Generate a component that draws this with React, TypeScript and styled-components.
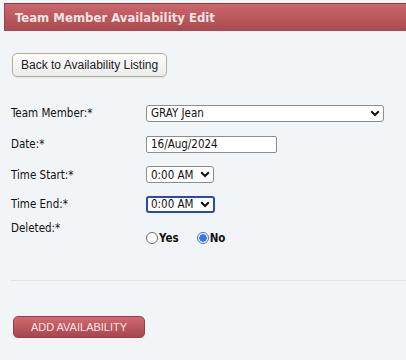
import React from 'react';
import styled, { createGlobalStyle } from 'styled-components';

const GlobalStyle = createGlobalStyle`
  html, body {
    margin: 0;
    padding: 0;
    background: #f2f5f8;
  }
  body {
    font-family: "DejaVu Sans Condensed", "DejaVu Sans", Verdana, sans-serif;
    color: #111;
  }
`;

const Page = styled.div`
  padding: 3px 0 0 4px;
  width: 420px;
`;

const TitleBar = styled.div`
  height: 28px;
  box-sizing: border-box;
  border-top: 1px solid #8c3a3f;
  border-left: 1px solid #9a4449;
  background: linear-gradient(#cc676b, #b8575c 55%, #a94a50);
  display: flex;
  align-items: center;
  padding-left: 10px;
  font-size: 13px;
  font-weight: 700;
  color: #f3e3e3;
`;

const Content = styled.div`
  padding: 22px 0 0 7px;
`;

const BackButton = styled.button`
  height: 24px;
  padding: 0 8px;
  margin-left: 1px;
  border: 1px solid #b5b092;
  border-radius: 5px;
  background: linear-gradient(#fdfdfd, #ececec);
  box-shadow: 0 1px 1px rgba(0, 0, 0, 0.08);
  font-family: "Liberation Sans", Arial, sans-serif;
  font-size: 12px;
  color: #222;
`;

const Form = styled.div`
  margin-top: 21px;
  display: grid;
  grid-template-columns: 135px 1fr;
  grid-template-rows: 30px 32px 29px 30px 30px;
  align-items: center;
  font-size: 11.5px;
`;

const Label = styled.div<{ $top?: boolean }>`
  white-space: nowrap;
  align-self: ${(p) => (p.$top ? 'start' : 'center')};
  padding-top: ${(p) => (p.$top ? 2 : 0)}px;
`;

const SelectBox = styled.div<{ $width: number; $focus?: boolean }>`
  width: ${(p) => p.$width}px;
  height: 17px;
  box-sizing: border-box;
  display: flex;
  align-items: center;
  justify-content: space-between;
  padding: 0 3px 0 ${(p) => (p.$focus ? 3 : 4)}px;
  background: #fff;
  border: ${(p) => (p.$focus ? '2px solid #2b49b3' : '1px solid #8d8d8d')};
  border-radius: 3px;
  font-size: 11.5px;
  color: #111;
  white-space: nowrap;
`;

const TextBox = styled.div`
  width: 131px;
  height: 17px;
  box-sizing: border-box;
  display: flex;
  align-items: center;
  padding: 0 4px;
  background: #fff;
  border: 1px solid #8d8d8d;
  border-radius: 2px;
  font-size: 11.5px;
`;

const RadioGroup = styled.div`
  display: flex;
  align-items: center;
  gap: 18px;
  transform: translateY(4px);
`;

const RadioItem = styled.label`
  display: flex;
  align-items: center;
  font-weight: 700;
  font-size: 11.5px;
`;

const RadioDot = styled.span<{ $on?: boolean }>`
  width: 12px;
  height: 12px;
  box-sizing: border-box;
  border-radius: 50%;
  border: 1px solid ${(p) => (p.$on ? '#3b6fe0' : '#6b6b6b')};
  background: ${(p) => (p.$on ? 'radial-gradient(circle, #3b73ef 0 3.5px, #fff 4px)' : '#fff')};
  margin-right: 1px;
`;

const Divider = styled.hr`
  margin: 31px 0 0 0;
  border: 0;
  border-top: 1px solid #e2e5e8;
`;

const AddButton = styled.button`
  margin: 35px 0 0 2px;
  width: 132px;
  height: 22px;
  border: 1px solid #9c3c43;
  border-radius: 5px;
  background: linear-gradient(#cf6a70, #b8545b 60%, #a8474e);
  box-shadow: 0 1px 1px rgba(0, 0, 0, 0.15);
  font-family: "Liberation Sans", Arial, sans-serif;
  font-size: 11px;
  color: #f7e6e7;
  text-transform: uppercase;
`;

const Chevron = () => (
  <svg width="10" height="7" viewBox="0 0 10 7">
    <path d="M1.2 1.2 L5 5 L8.8 1.2" fill="none" stroke="#111" strokeWidth="2" />
  </svg>
);

export default function App() {
  return (
    <Page>
      <GlobalStyle />
      <TitleBar>Team Member Availability Edit</TitleBar>
      <Content>
        <BackButton>Back to Availability Listing</BackButton>
        <Form>
          <Label>Team Member:*</Label>
          <SelectBox $width={238}>
            <span>GRAY Jean</span>
            <Chevron />
          </SelectBox>
          <Label>Date:*</Label>
          <TextBox>16/Aug/2024</TextBox>
          <Label>Time Start:*</Label>
          <SelectBox $width={68}>
            <span>0:00 AM</span>
            <Chevron />
          </SelectBox>
          <Label>Time End:*</Label>
          <SelectBox $width={69} $focus>
            <span>0:00 AM</span>
            <Chevron />
          </SelectBox>
          <Label $top>Deleted:*</Label>
          <RadioGroup>
            <RadioItem>
              <RadioDot />
              Yes
            </RadioItem>
            <RadioItem>
              <RadioDot $on />
              No
            </RadioItem>
          </RadioGroup>
        </Form>
        <Divider />
        <AddButton>Add Availability</AddButton>
      </Content>
    </Page>
  );
}
